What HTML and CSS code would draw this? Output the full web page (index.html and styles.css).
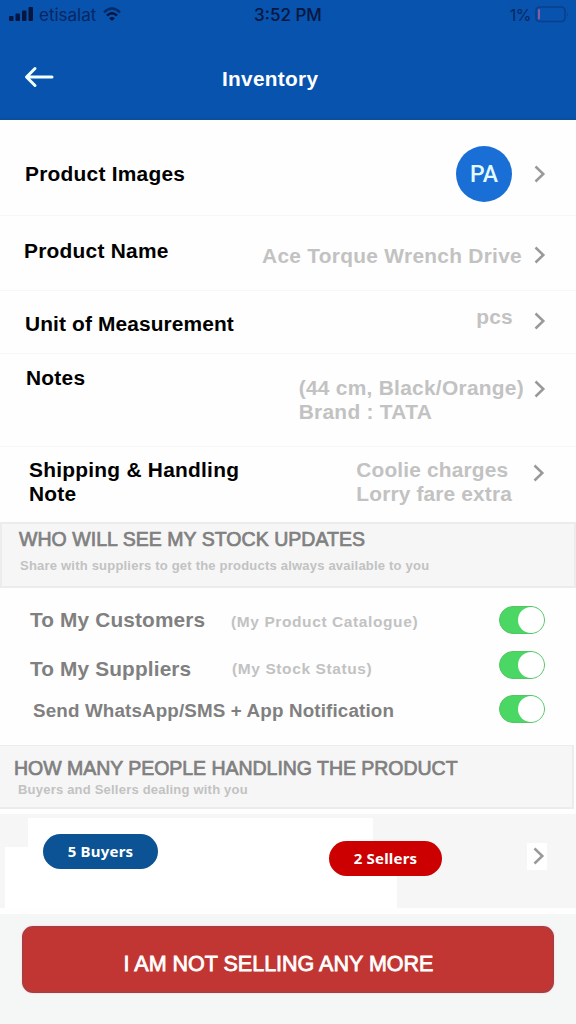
FILE: index.html
```html
<!DOCTYPE html>
<html lang="en">
<head>
<meta charset="utf-8">
<title>Inventory</title>
<link rel="stylesheet" href="styles.css">
</head>
<body>
<svg width="0" height="0" class="defs"><symbol id="chev" viewBox="0 0 12 18"><path d="M1.500 1.500 9.300 9 1.500 16.500" fill="none" stroke="#999" stroke-width="2.500"/></symbol></svg>
<header class="header">
  <div class="status">
    <div class="carrier">
      <svg class="signal" width="25" height="16" viewBox="0 0 25 16" fill="#06163f"><rect x="0" y="10" width="4.500" height="5" rx="1"/><rect x="6.500" y="7.500" width="4.500" height="7.500" rx="1"/><rect x="13" y="4.500" width="4.500" height="10.500" rx="1"/><rect x="19.500" y="1" width="4.500" height="14" rx="1"/></svg>
      <span class="etisalat">etisalat</span>
      <svg class="wifi" width="18" height="15" viewBox="0 0 18 15" fill="none" stroke="#06163f" stroke-width="2.400"><path d="M1 5.300Q9-2.300 17 5.300" opacity=".65"/><path d="M4 8.700Q9 4 14 8.700"/><path d="M9 14 6.200 11.200Q9 8.800 11.800 11.200Z" fill="#06163f" stroke="none"/></svg>
    </div>
    <span class="clock">3:52 PM</span>
    <div class="power"><span class="percent">1%</span>
      <svg width="34" height="17" viewBox="0 0 34 17" fill="none"><rect x="1" y="1" width="29" height="14.500" rx="3.500" stroke="#0b3f8c" stroke-width="1.600"/><rect x="3" y="3" width="2" height="10.500" rx="1" fill="#8a5c9c"/><path d="M32 6v5q1.500-2.500 0-5" fill="#0b3f8c"/></svg>
    </div>
  </div>
  <div class="nav">
    <svg class="back" width="30" height="22" viewBox="0 0 30 22" fill="none" stroke="#f2ffff" stroke-width="3" stroke-linecap="round" stroke-linejoin="round"><path d="M28 11H3M11 2.500 2.500 11 11 19.500"/></svg>
    <h1 class="title">Inventory</h1>
  </div>
</header>
<main>
  <section class="details">
    <div class="row images"><span class="label">Product Images</span><span class="avatar">PA</span><svg class="chev"><use href="#chev"/></svg></div>
    <div class="row name"><span class="label">Product Name</span><span class="value">Ace Torque Wrench Drive</span><svg class="chev"><use href="#chev"/></svg></div>
    <div class="row unit"><span class="label">Unit of Measurement</span><span class="value">pcs</span><svg class="chev"><use href="#chev"/></svg></div>
    <div class="row notes"><span class="label">Notes</span><span class="value">(44 cm, Black/Orange)<br><span class="brand">Brand : TATA</span></span><svg class="chev"><use href="#chev"/></svg></div>
    <div class="row shipping"><span class="label">Shipping &amp; Handling<br>Note</span><span class="value">Coolie charges<br>Lorry fare extra</span><svg class="chev"><use href="#chev"/></svg></div>
  </section>
  <section class="band updates"><h2 class="band-title">WHO WILL SEE MY STOCK UPDATES</h2><p class="band-sub">Share with suppliers to get the products always available to you</p></section>
  <section class="toggles">
    <div class="toggle-row customers"><span class="tlabel">To My Customers</span><span class="hint">(My Product Catalogue)</span><span class="switch"><i class="knob"></i></span></div>
    <div class="toggle-row suppliers"><span class="tlabel">To My Suppliers</span><span class="hint">(My Stock Status)</span><span class="switch"><i class="knob"></i></span></div>
    <div class="toggle-row send"><span class="tlabel">Send WhatsApp/SMS + App Notification</span><span class="switch"><i class="knob"></i></span></div>
  </section>
  <section class="band people"><h2 class="band-title">HOW MANY PEOPLE HANDLING THE PRODUCT</h2><p class="band-sub">Buyers and Sellers dealing with you</p></section>
  <section class="counts">
    <span class="pill buyers">5 Buyers</span><span class="pill sellers">2 Sellers</span>
    <span class="go"><svg class="chev"><use href="#chev"/></svg></span>
  </section>
</main>
<footer class="footer"><button class="stop">I AM NOT SELLING ANY MORE</button></footer>
</body>
</html>
```
FILE: styles.css
```css
* { box-sizing: border-box; }
body { margin: 0; width: 576px; height: 1024px; overflow: hidden; background: #fefefe; font-family: "Liberation Sans", Arial, sans-serif; white-space: nowrap; }
svg { display: block; flex: none; }
.defs { position: absolute; }
h1, h2, p { margin: 0; }

.header { height: 120px; background: #0753ae; border-bottom: 2px solid #0a4f9d; }
.status { height: 30px; display: grid; grid-template-columns: 1fr auto 1fr; align-items: start; color: #06163f; line-height: 20px; }
.carrier { display: flex; padding: 6px 0 0 9px; }
.etisalat { margin: -1px 0 0 5px; font: 17px/20px Inter, sans-serif; color: #082762; }
.wifi { margin: 1px 0 0 7px; }
.clock { margin-top: 5px; font: 500 17px/20px Inter, sans-serif; }
.power { display: flex; justify-content: flex-end; padding: 6px 7px 0 0; }
.percent { margin: -1px 4px 0 0; font: 16px/20px Inter, sans-serif; letter-spacing: -.5px; color: #082762; }
.nav { display: grid; grid-template-columns: 222px 1fr; padding-top: 36px; }
.back { margin-left: 24px; }
.title { margin-top: 1px; font-size: 20.8px; line-height: 24px; color: #fff; letter-spacing: .3px; }

.row { display: flex; align-items: flex-start; padding-right: 30px; border-bottom: 1px solid #f7f7f7; font-weight: bold; font-size: 20.9px; line-height: 24px; }
.label { color: #000; letter-spacing: .25px; margin-right: auto; }
.value { color: #c2c2c2; letter-spacing: .28px; }
.chev { width: 12px; height: 18px; }
.images { height: 96px; padding-left: 25px; }
.images .label { margin-top: 42px; }
.avatar { width: 56px; height: 56px; margin: 26px 22px 0 0; border-radius: 50%; background: #196fd6; color: #e0faff; font: 500 23px/57px Roboto, sans-serif; text-align: center; }
.images .chev { margin-top: 45px; }
.name { height: 75px; padding-left: 24px; }
.name .label { margin-top: 23px; }
.name .value { margin: 28px 12px 0 0; }
.name .chev { margin-top: 30px; }
.unit { height: 63px; padding-left: 25px; }
.unit .label { margin-top: 21px; letter-spacing: .12px; }
.unit .value { margin: 14px 21px 0 0; }
.unit .chev { margin-top: 21px; }
.notes { height: 93px; padding-left: 26px; }
.notes .label { margin-top: 12px; }
.notes .value { margin: 22px 10px 0 0; }
.notes .chev { margin-top: 26px; }
.shipping { height: 75px; padding-left: 29px; border: 0; }
.shipping .label { margin-top: 11px; }
.shipping .value { margin: 11px 21px 0 0; letter-spacing: .15px; }
.shipping .chev { margin: 17px 1px 0 0; }

.band { background: #f6f6f6; border: 2px solid #ececec; }
.band-title { font-size: 19.5px; line-height: 24px; font-weight: normal; -webkit-text-stroke: .7px #808080; color: #808080; letter-spacing: .04px; }
.band-sub { font-size: 13px; line-height: 16px; font-weight: bold; color: #c2c2c2; letter-spacing: .21px; }
.updates { height: 66px; padding: 3px 17px; }
.updates .band-sub { padding: 7px 0 0 1px; }
.people { width: 574px; height: 64px; padding: 10px 12px; border-left-width: 0; border-top-width: 1px; padding-left: 14px; }
.people .band-title { letter-spacing: -.03px; }
.people .band-sub { padding: 2px 0 0 4px; }

.toggles { height: 157px; padding-top: 18px; }
.toggle-row { display: flex; align-items: flex-start; padding: 0 31px 0 30px; font-weight: bold; }
.tlabel { color: #808080; font-size: 20.8px; line-height: 24px; letter-spacing: .15px; }
.hint { color: #c2c2c2; font-size: 15.5px; line-height: 18px; letter-spacing: .6px; }
.switch { width: 46px; height: 28px; margin-left: auto; border-radius: 14px; background: #4bd763; border: 1px solid #55c466; display: flex; justify-content: flex-end; }
.knob { width: 26px; height: 26px; border-radius: 50%; background: #fff; }
.customers { height: 45px; }
.customers .tlabel { margin-top: 2px; width: 201px; }
.customers .hint { margin-top: 7px; }
.suppliers { height: 44px; }
.suppliers .tlabel { margin-top: 6px; width: 202px; }
.suppliers .hint { margin-top: 9px; }
.send { padding-left: 33px; }
.send .tlabel { font-size: 18.8px; margin-top: 4px; }

.counts { margin-top: 5px; height: 94px; display: flex; align-items: flex-start; padding-left: 43px;
  background: linear-gradient(#fff, #fff) 28px 4px / 345px 90px no-repeat, linear-gradient(#fff, #fff) 5px 33px / 392px 61px no-repeat, #f6f6f6; }
.pill { height: 35px; border-radius: 18px; color: #fff; text-align: center; font: bold 15px/35px "Noto Sans", sans-serif; letter-spacing: .2px; }
.buyers { width: 115px; margin-top: 20px; background: #0b5394; }
.sellers { width: 113px; margin: 27px 0 0 171px; background: #c00; }
.go { margin: 29px 0 0 85px; width: 20px; height: 27px; padding: 4px 0 0 6px; background: #fff; }

.footer { margin-top: 6px; height: 110px; padding: 12px 22px; background: #f5f6f6; }
.stop { display: block; width: 532px; height: 67px; padding: 8px 19px 0 0; border: 2px solid #ad3c40; border-radius: 11px; background: #c13632; color: #fff; font: 21.500px/24px "Liberation Sans", Arial, sans-serif; -webkit-text-stroke: .8px #fff; text-align: center; box-shadow: 0 0 2px #f1c9c7; }
```
